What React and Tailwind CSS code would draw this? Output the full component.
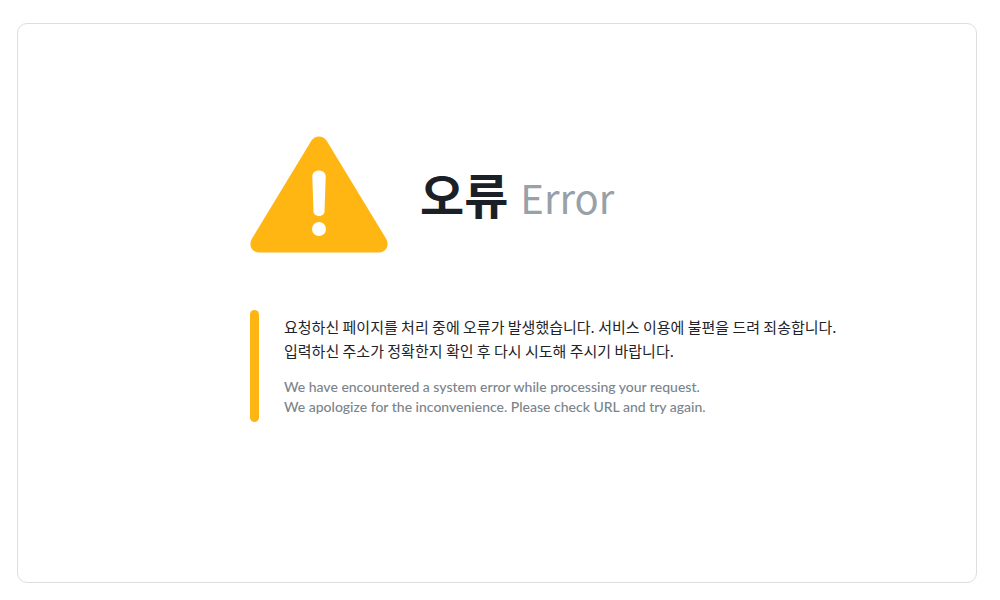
export default function App() {
  return (
    <div className="flex min-h-screen bg-white pt-[23px] pr-[23px] pb-[17px] pl-[17px] font-['Noto_Sans_CJK_KR',sans-serif]">
      <main className="flex flex-1 flex-col rounded-[10px] border border-[#dcdee1] pt-28 pl-[232px]">
        <header className="flex items-center gap-8">
          <svg viewBox="0 0 138 117" className="h-[117px] w-[138px] shrink-0" role="img" aria-label="오류">
            <path d="M61.5 4.500C65 -1 73 -1 76.500 4.500L136 102.500C140 109.500 136 116.500 129 116.500H9C2 116.500 -2 109.500 2 102.500Z" fill="#ffb613" />
            <path d="M62.300 40.500C62.300 32.500 75.700 32.500 75.700 40.500L74.500 75.500C74 81.500 64 81.500 63.500 75.500Z" fill="#fff" />
            <circle cx="69" cy="93" r="7" fill="#fff" />
          </svg>
          <h1 className="flex items-baseline gap-3 pb-1 text-5xl font-bold text-[#1b2026]">
            오류
            <span lang="en" className="text-[40px] font-normal text-[#98a0a8]">Error</span>
          </h1>
        </header>
        <section className="mt-[57px] flex gap-[25px]">
          <div className="w-[9px] shrink-0 rounded-full bg-[#ffb613]" />
          <div className="py-[5px] whitespace-nowrap">
            <p className="text-[15px] leading-6 text-[#1f2328]">
              요청하신 페이지를 처리 중에 오류가 발생했습니다. 서비스 이용에 불편을 드려 죄송합니다.
              <br />
              입력하신 주소가 정확한지 확인 후 다시 시도해 주시기 바랍니다.
            </p>
            <p lang="en" className="mt-[14px] font-['Lato',sans-serif] text-sm leading-5 font-medium text-[#7b848c]">
              We have encountered a system error while processing your request.
              <br />
              We apologize for the inconvenience. Please check URL and try again.
            </p>
          </div>
        </section>
      </main>
    </div>
  );
}
